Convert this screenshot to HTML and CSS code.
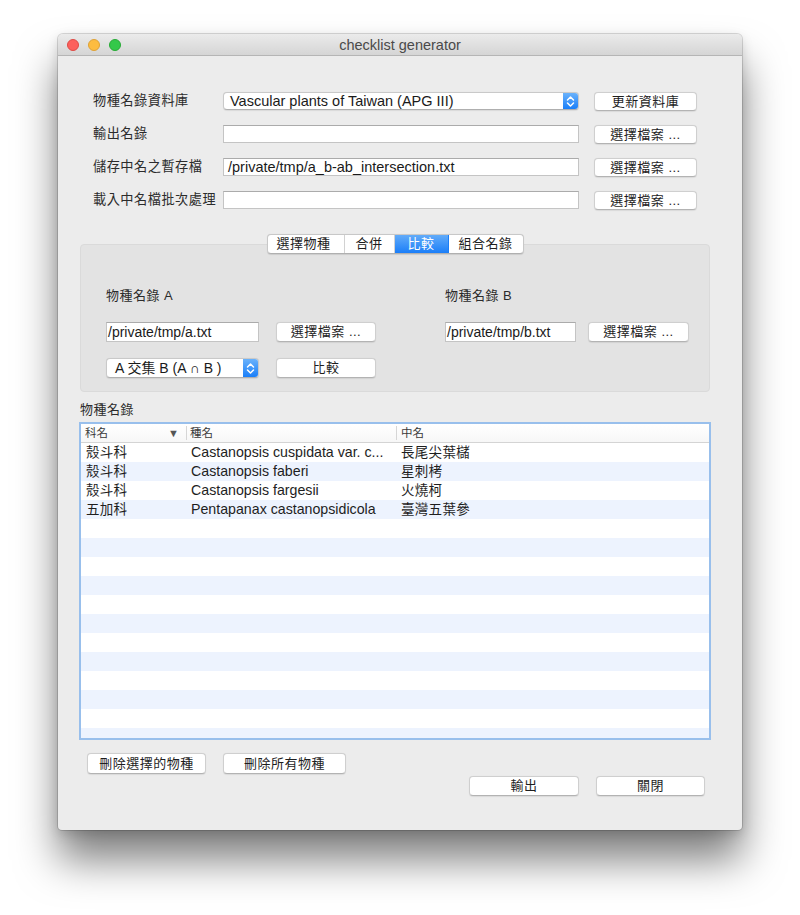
FILE: index.html
```html
<!DOCTYPE html>
<html lang="zh-Hant">
<head>
<meta charset="utf-8">
<title>checklist generator</title>
<link rel="stylesheet" href="styles.css">
</head>
<body>
<div class="window">
  <div class="titlebar">
    <div class="lights">
      <span class="light red"></span>
      <span class="light yellow"></span>
      <span class="light green"></span>
    </div>
    <div class="title">checklist generator</div>
    <div></div>
  </div>

  <div class="content">
    <div class="form">
      <div class="label">物種名錄資料庫</div>
      <div class="popup wide">
        <span class="popup-text">Vascular plants of Taiwan (APG III)</span>
        <span class="popup-arrow"><svg width="15" height="17" viewBox="0 0 15 17"><path d="M4.5 7 L7.5 4 L10.5 7 M4.5 10 L7.5 13 L10.5 10" fill="none" stroke="#fff" stroke-width="1.5" stroke-linecap="round" stroke-linejoin="round"/></svg></span>
      </div>
      <div class="btn">更新資料庫</div>

      <div class="label">輸出名錄</div>
      <div class="input"></div>
      <div class="btn">選擇檔案 ...</div>

      <div class="label">儲存中名之暫存檔</div>
      <div class="input">/private/tmp/a_b-ab_intersection.txt</div>
      <div class="btn">選擇檔案 ...</div>

      <div class="label">載入中名檔批次處理</div>
      <div class="input"></div>
      <div class="btn">選擇檔案 ...</div>
    </div>

    <div class="group">
      <div class="tabs">
        <div class="seg s1">選擇物種</div>
        <div class="seg s2">合併</div>
        <div class="seg s3 active">比較</div>
        <div class="seg s4">組合名錄</div>
      </div>
      <div class="box">
        <div class="col col-a">
          <div class="sublabel">物種名錄 A</div>
          <div class="row">
            <div class="input in-a">/private/tmp/a.txt</div>
            <div class="btn b-a">選擇檔案 ...</div>
          </div>
          <div class="row row2">
            <div class="popup in-a">
              <span class="popup-text">A 交集 B (A ∩ B )</span>
              <span class="popup-arrow"><svg width="15" height="19" viewBox="0 0 15 19"><path d="M4.5 8 L7.5 5 L10.5 8 M4.5 11 L7.5 14 L10.5 11" fill="none" stroke="#fff" stroke-width="1.5" stroke-linecap="round" stroke-linejoin="round"/></svg></span>
            </div>
            <div class="btn b-a">比較</div>
          </div>
        </div>
        <div class="col col-b">
          <div class="sublabel">物種名錄 B</div>
          <div class="row">
            <div class="input in-b">/private/tmp/b.txt</div>
            <div class="btn b-b">選擇檔案 ...</div>
          </div>
        </div>
      </div>
    </div>

    <div class="list-label">物種名錄</div>
    <div class="table">
      <div class="thead">
        <div class="th c1">科名<span class="sort">▼</span></div>
        <div class="th c2">種名</div>
        <div class="th c3">中名</div>
      </div>
      <div class="tbody">
        <div class="tr">
          <div class="td c1">殼斗科</div>
          <div class="td c2">Castanopsis cuspidata var. c...</div>
          <div class="td c3">長尾尖葉櫧</div>
        </div>
        <div class="tr">
          <div class="td c1">殼斗科</div>
          <div class="td c2">Castanopsis faberi</div>
          <div class="td c3">星刺栲</div>
        </div>
        <div class="tr">
          <div class="td c1">殼斗科</div>
          <div class="td c2">Castanopsis fargesii</div>
          <div class="td c3">火燒柯</div>
        </div>
        <div class="tr">
          <div class="td c1">五加科</div>
          <div class="td c2">Pentapanax castanopsidicola</div>
          <div class="td c3">臺灣五葉參</div>
        </div>
      </div>
    </div>

    <div class="actions-left">
      <div class="btn act1">刪除選擇的物種</div>
      <div class="btn act2">刪除所有物種</div>
    </div>
    <div class="actions-right">
      <div class="btn act3">輸出</div>
      <div class="btn act4">關閉</div>
    </div>
  </div>
</div>
</body>
</html>
```

FILE: styles.css
```css
* { box-sizing: border-box; }

html { background: #ffffff; }

body {
  margin: 0;
  padding: 34px 0 85px 58px;
  min-height: 915px;
  background: #ffffff;
  font-family: "Liberation Sans", "Noto Sans CJK TC", sans-serif;
  font-size: 13px;
  color: #262626;
}

.window {
  width: 684px;
  height: 796px;
  background: #ececec;
  border-radius: 5px 5px 4px 4px;
  box-shadow: 0 0 0 1px rgba(0,0,0,0.14), 0 30px 42px rgba(0,0,0,0.5), 0 4px 12px rgba(0,0,0,0.15);
  display: flex;
  flex-direction: column;
}

.titlebar {
  height: 22px;
  flex: none;
  display: grid;
  grid-template-columns: 1fr auto 1fr;
  align-items: center;
  background: linear-gradient(#ebebeb, #d5d5d5);
  border-bottom: 1px solid #b5b5b5;
  border-radius: 5px 5px 0 0;
}

.lights {
  display: flex;
  gap: 9px;
  padding-left: 9px;
}

.light {
  width: 12px;
  height: 12px;
  border-radius: 50%;
}
.red { background: #fc605c; border: 0.5px solid #de4a45; }
.yellow { background: #fdbc40; border: 0.5px solid #dea236; }
.green { background: #34c84a; border: 0.5px solid #27aa35; }

.title {
  font-size: 14.5px;
  color: #4a4a4a;
  line-height: 22px;
}

.content {
  padding-top: 36px;
  flex: 1;
}

/* top form */
.form {
  margin-left: 35px;
  display: grid;
  grid-template-columns: 115px 356px 103px;
  grid-auto-rows: 18px;
  column-gap: 15px;
  row-gap: 15px;
  align-items: center;
}

.label {
  font-size: 13.2px;
  letter-spacing: 0.5px;
  color: #2b2b2b;
  white-space: nowrap;
  line-height: 18px;
}

.input {
  height: 18px;
  background: #fff;
  border: 1px solid #c4c4c4;
  border-top-color: #ababab;
  padding: 0 4px;
  line-height: 16px;
  font-size: 14.5px;
  color: #1a1a1a;
  white-space: nowrap;
  overflow: hidden;
}

.btn {
  height: 19px;
  background: #fff;
  border: 1px solid #cfcfcf;
  border-bottom-color: #b3b3b3;
  border-radius: 4px;
  box-shadow: 0 0.5px 1px rgba(0,0,0,0.08);
  text-align: center;
  line-height: 17px;
  font-size: 13px;
  letter-spacing: 0.5px;
  color: #1e1e1e;
  white-space: nowrap;
}

.popup {
  height: 18px;
  background: #fff;
  border: 1px solid #c9c9c9;
  border-bottom-color: #afafaf;
  border-radius: 4px;
  display: flex;
  align-items: stretch;
  overflow: hidden;
  box-shadow: 0 0.5px 1px rgba(0,0,0,0.08);
}

.popup-text {
  flex: 1;
  padding-left: 6px;
  line-height: 16px;
  font-size: 14.5px;
  color: #1a1a1a;
  white-space: nowrap;
}

.popup-arrow {
  width: 15px;
  flex: none;
  background: linear-gradient(#6ab2fb, #1a7ff9);
  display: flex;
  align-items: center;
  justify-content: center;
}

/* group with tabs */
.group {
  margin: 25px 0 0 22px;
  width: 630px;
}

.tabs {
  position: relative;
  z-index: 1;
  display: flex;
  width: 257px;
  height: 20px;
  margin: 0 auto -10px;
  background: #fff;
  border: 1px solid #c8c8c8;
  border-bottom-color: #b0b0b0;
  border-radius: 4px;
  overflow: hidden;
  box-shadow: 0 0.5px 1px rgba(0,0,0,0.1);
}

.seg {
  text-align: center;
  line-height: 18px;
  font-size: 13px;
  letter-spacing: 0.5px;
  color: #1e1e1e;
  border-right: 1px solid #d2d2d2;
}
.seg:last-child { border-right: none; }
.s1 { width: 77px; padding-right: 4px; }
.s2 { width: 50px; }
.s3 { width: 54px; }
.s4 { flex: 1; }
.seg.active {
  background: linear-gradient(#62abf9, #1b7ef8);
  color: #fff;
  border-right-color: #1b7ef8;
}

.box {
  height: 148px;
  background: #e3e3e3;
  border: 1px solid #dadada;
  border-radius: 4px;
  display: grid;
  grid-template-columns: 339px 1fr;
  padding: 43px 0 0 25px;
}

.sublabel {
  line-height: 16px;
  font-size: 13px;
  letter-spacing: 0.5px;
  color: #2b2b2b;
}

.row {
  display: flex;
  align-items: center;
  margin-top: 18px;
  height: 20px;
}
.row2 { margin-top: 16px; }

.row .input, .row .btn, .row .popup { height: 20px; }
.row .input { line-height: 18px; padding-left: 1px; font-size: 14px; }
.row .btn { line-height: 18px; }
.row .popup-text { line-height: 18px; padding-left: 8px; font-size: 14px; }

.in-a { width: 153px; }
.b-a { width: 100px; margin-left: 17px; }
.in-b { width: 131px; }
.b-b { width: 101px; margin-left: 12px; }

.list-label {
  margin: 10px 0 0 22px;
  line-height: 16px;
  font-size: 13px;
  letter-spacing: 0.5px;
  color: #2b2b2b;
}

/* table */
.table {
  margin: 4px 0 0 21px;
  width: 632px;
  height: 318px;
  border: 2px solid #98bfec;
  background: #fff;
  display: flex;
  flex-direction: column;
}

.thead {
  height: 19px;
  flex: none;
  display: grid;
  grid-template-columns: 105px 210px 1fr;
  align-items: center;
  background: linear-gradient(#ffffff, #f7f7f7);
  border-bottom: 1px solid #d4d4d4;
}

.th {
  font-size: 11.5px;
  color: #3a3a3a;
  line-height: 14px;
  position: relative;
}
.th.c1 { padding-left: 4px; }
.th.c2 { padding-left: 3px; border-left: 1px solid #d6d6d6; }
.th.c3 { padding-left: 4px; border-left: 1px solid #d6d6d6; }

.sort {
  position: absolute;
  left: 87px;
  top: 0;
  font-size: 11px;
  color: #555;
}

.tbody {
  flex: 1;
  background: repeating-linear-gradient(#ffffff 0 19px, #edf3fe 19px 38px);
}

.tr {
  height: 19px;
  display: grid;
  grid-template-columns: 105px 210px 1fr;
  align-items: center;
}

.td {
  font-size: 14px;
  line-height: 19px;
  color: #1e1e1e;
  white-space: nowrap;
  overflow: hidden;
}
.td.c1 { padding-left: 5px; font-size: 13.5px; letter-spacing: 0.3px; }
.td.c2 { padding-left: 5px; font-size: 14.2px; }
.td.c3 { padding-left: 5px; font-size: 13.5px; letter-spacing: 0.3px; }

/* bottom actions */
.actions-left {
  display: flex;
  margin: 13px 0 0 29px;
  gap: 17px;
}
.act1 { width: 119px; height: 21px; line-height: 19px; }
.act2 { width: 123px; height: 21px; line-height: 19px; }

.actions-right {
  display: flex;
  margin: 2px 0 0 411px;
  gap: 17px;
}
.act3 { width: 110px; height: 20px; line-height: 18px; }
.act4 { width: 109px; height: 20px; line-height: 18px; }
```
